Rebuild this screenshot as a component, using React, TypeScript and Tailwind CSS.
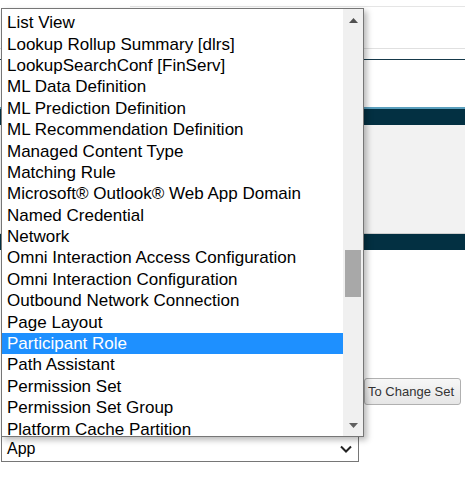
const options = [
  'List View',
  'Lookup Rollup Summary [dlrs]',
  'LookupSearchConf [FinServ]',
  'ML Data Definition',
  'ML Prediction Definition',
  'ML Recommendation Definition',
  'Managed Content Type',
  'Matching Rule',
  'Microsoft® Outlook® Web App Domain',
  'Named Credential',
  'Network',
  'Omni Interaction Access Configuration',
  'Omni Interaction Configuration',
  'Outbound Network Connection',
  'Page Layout',
  'Participant Role',
  'Path Assistant',
  'Permission Set',
  'Permission Set Group',
  'Platform Cache Partition',
]

const selected = 'Participant Role'

function Scrollbar() {
  return (
    <div className="w-[20px] h-full bg-[#f0f0f0] flex flex-col items-center">
      <div className="h-[22px] w-full flex items-center justify-center">
        <svg width="9" height="5" viewBox="0 0 9 5">
          <polygon points="0,5 4.5,0 9,5" fill="#505050" />
        </svg>
      </div>
      <div className="h-[219px]" />
      <div className="w-[16px] h-[47px] bg-[#a8a8a8]" />
      <div className="flex-1" />
      <div className="h-[22px] w-full flex items-center justify-center">
        <svg width="9" height="5" viewBox="0 0 9 5">
          <polygon points="0,0 9,0 4.5,5" fill="#606060" />
        </svg>
      </div>
    </div>
  )
}

function Dropdown() {
  return (
    <div className="absolute left-[1px] top-[8px] w-[363px] h-[429px] bg-white border border-[#767676] shadow-[3px_3px_6px_rgba(0,0,0,0.28)] flex overflow-hidden">
      <div className="w-[341px] h-full pt-[3px] overflow-hidden">
        {options.map((o) => (
          <div
            key={o}
            className={`h-[21.4px] pl-[5px] flex items-center text-[17px] leading-none whitespace-nowrap ${
              o === selected ? 'bg-[#1e90ff] text-white' : 'text-black'
            }`}
          >
            {o}
          </div>
        ))}
      </div>
      <Scrollbar />
    </div>
  )
}

export default function App() {
  return (
    <div className="relative w-[465px] h-[487px] bg-white overflow-hidden font-['Liberation_Sans',Arial,sans-serif]">
      <div className="h-[6px]" />
      <div className="ml-[130px] h-px bg-[#e5e5e5]" />
      <div className="h-[41px]" />
      <div className="h-px bg-[#e0e0e0]" />
      <div className="h-[10px]" />
      <div className="h-px bg-[#16394a]" />
      <div className="h-[47px]" />
      <div className="h-[2px] bg-[#5a9fbd]" />
      <div className="h-[16px] bg-[#033042]" />
      <div className="h-[108px] bg-[#f2f2f2]" />
      <div className="h-px bg-[#cfcfcf]" />
      <div className="h-[16px] bg-[#033042]" />
      <div className="h-[128px]" />
      <div className="flex justify-end pr-[4px]">
        <button className="w-[97px] h-[27px] pl-[3px] text-left border border-[#b0b0b0] rounded-[3px] bg-gradient-to-b from-[#f7f7f7] to-[#e6e6e6] text-[13px] text-[#333] leading-none whitespace-nowrap">
          To Change Set
        </button>
      </div>
      <div className="h-[31px]" />
      <div className="ml-[1px] w-[358px] h-[26px] border border-[#767676] flex items-center justify-between pl-[5px] pr-[6px] text-[16px] text-black">
        <span>App</span>
        <svg width="12" height="8" viewBox="0 0 12 8">
          <path d="M1 1.5 L6 6.5 L11 1.5" fill="none" stroke="#222" strokeWidth="2" />
        </svg>
      </div>
      <Dropdown />
    </div>
  )
}
